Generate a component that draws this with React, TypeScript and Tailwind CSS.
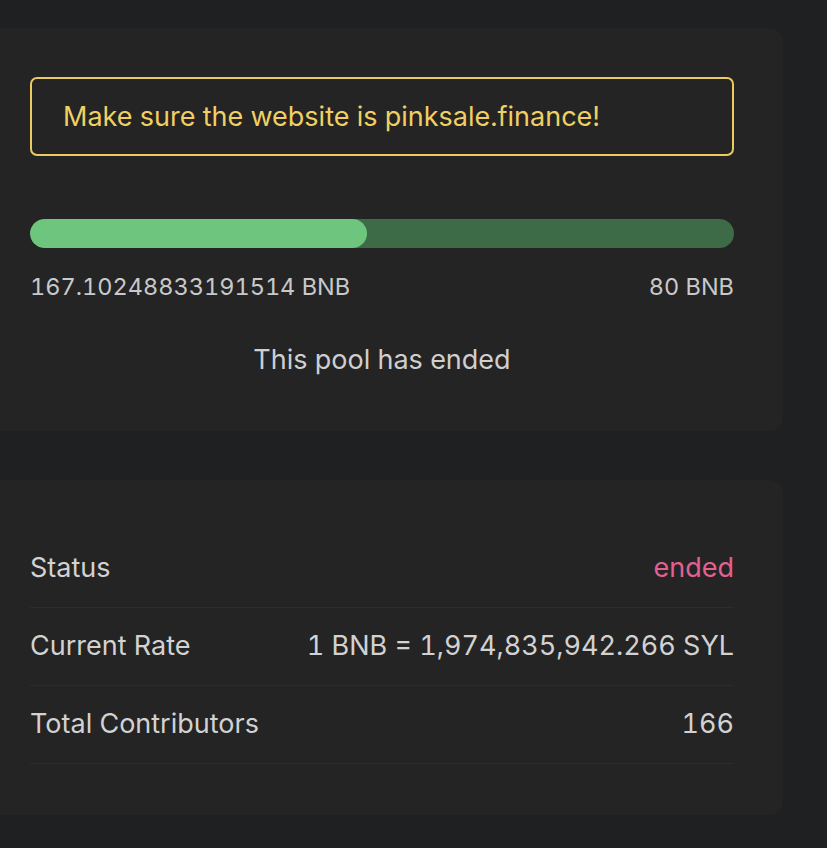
import React from "react";

const rows = [
  { label: "Status", value: "ended", pink: true },
  { label: "Current Rate", value: "1 BNB = 1,974,835,942.266 SYL" },
  { label: "Total Contributors", value: "166" },
];

export default function App() {
  const raised = 167.10248833191514;
  const pct = 47.9;

  return (
    <div
      className="min-h-[848px] w-[827px] bg-[#1f2022] pt-[28px] text-[#cfcfcf] tabular-nums"
      style={{ fontFamily: "Inter, 'Noto Sans', sans-serif" }}
    >
      {/* Pool card */}
      <div className="w-[783px] rounded-r-[14px] bg-[#242424] pl-[30px] pr-[49px] pt-[49px] pb-[55px]">
        <div className="flex h-[79px] items-center rounded-[7px] border-2 border-[#ebcb5f] px-[31px] text-[27px] leading-[32px] text-[#f0cf63]">
          Make sure the website is pinksale.finance!
        </div>

        <div className="mt-[63px] h-[29px] w-full overflow-hidden rounded-full bg-[#3d6a47]">
          <div className="h-full rounded-full bg-[#6ec57e]" style={{ width: `${pct}%` }} />
        </div>

        <div className="mt-[25px] flex items-center justify-between text-[23.5px] leading-[28px] text-[#c9c9c9]">
          <span>{raised} BNB</span>
          <span>80 BNB</span>
        </div>

        <div className="mt-[43px] text-center text-[27px] leading-[32px] text-[#cfcfcf]">
          This pool has ended
        </div>
      </div>

      {/* Info card */}
      <div className="mt-[49px] w-[783px] rounded-r-[14px] bg-[#242424] pl-[30px] pr-[49px] pt-[50px] pb-[51px]">
        {rows.map((r) => (
          <div
            key={r.label}
            className="flex h-[78px] items-center justify-between border-b border-[#2c2c2c] text-[27px]"
          >
            <span className="text-[#d2d2d2]">{r.label}</span>
            <span className={r.pink ? "text-[#e5608f]" : "text-[#d2d2d2]"}>{r.value}</span>
          </div>
        ))}
      </div>
    </div>
  );
}
